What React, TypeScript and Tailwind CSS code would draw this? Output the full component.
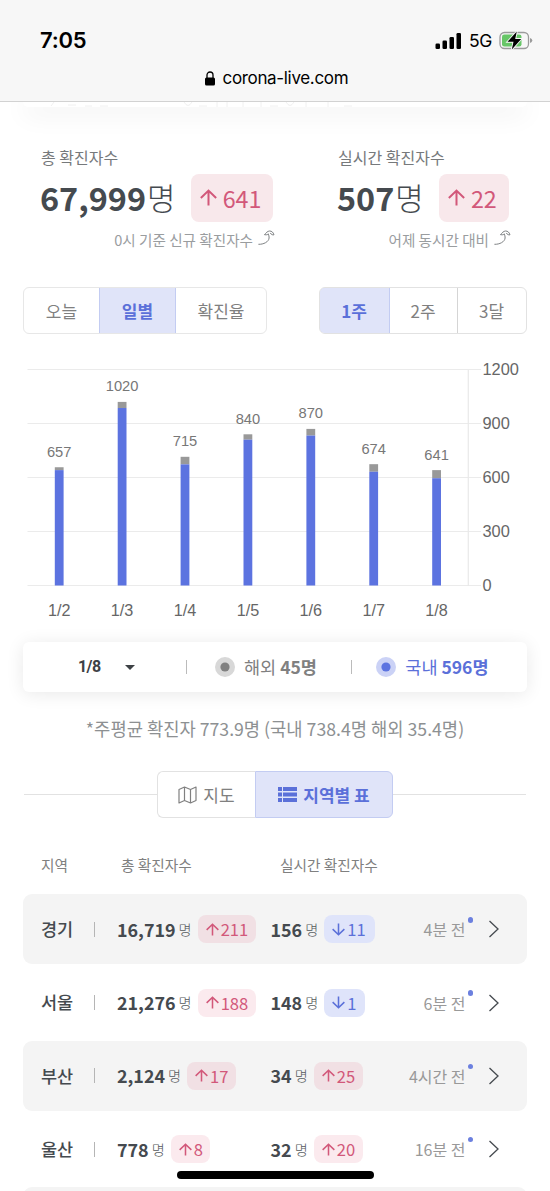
import React from "react";

const days = [
  { date: "1/2", total: 657, abroad: 16 },
  { date: "1/3", total: 1020, abroad: 34 },
  { date: "1/4", total: 715, abroad: 42 },
  { date: "1/5", total: 840, abroad: 30 },
  { date: "1/6", total: 870, abroad: 37 },
  { date: "1/7", total: 674, abroad: 42 },
  { date: "1/8", total: 641, abroad: 45 },
];

const regions = [
  { name: "경기", total: "16,719", totalDiff: 211, live: "156", liveDiff: -11, ago: "4분 전" },
  { name: "서울", total: "21,276", totalDiff: 188, live: "148", liveDiff: -1, ago: "6분 전" },
  { name: "부산", total: "2,124", totalDiff: 17, live: "34", liveDiff: 25, ago: "4시간 전" },
  { name: "울산", total: "778", totalDiff: 8, live: "32", liveDiff: 20, ago: "16분 전" },
];

const Arrow = ({ size, down = false }: { size: number; down?: boolean }) => (
  <svg
    width={size}
    height={size}
    viewBox="0 0 16 16"
    fill="none"
    stroke="currentColor"
    strokeWidth="1.9"
    className={down ? "rotate-180" : ""}
  >
    <path d="M8 15.5V2M.8 8.500L8 1.500l7.200 7" />
  </svg>
);

const CurvedArrow = () => (
  <svg width="17" height="16" viewBox="0 0 17 16" fill="none" stroke="#7e8183" strokeWidth="1" strokeLinecap="round" strokeLinejoin="round">
    <path d="M.8 14.300c4.800.2 9.900-2.400 10.300-6.300.1-1.600-.2-2.700-.8-3.800M6.800 4.700C7.900 2.600 9.600 1.200 11.600 1c2.200 0 3.600 1.300 4.400 3.800-1.600.3-2.700-.2-3.500-1.500M6.800 4.700c1.400.3 2.500.1 3.500-.5" />
  </svg>
);

/* ======= STATUS BAR ======= */
const StatusBar = () => (
  <header className="h-[102px] border-b border-[#d2d2d2] bg-[#f7f7f7] text-black">
    <div className="flex h-[62px] items-end justify-between pr-[17px] pb-[11px] pl-10 font-['Inter',sans-serif]">
      <div className="text-[22px] leading-[22px] font-semibold tracking-[-0.2px]">7:05</div>
      <div className="flex items-center">
        <svg width="26" height="16" viewBox="0 0 26 16">
          <rect x="0.500" y="10.500" width="4.500" height="5.500" rx="1.300" />
          <rect x="7.500" y="7.500" width="4.500" height="8.500" rx="1.300" />
          <rect x="14.500" y="4" width="4.500" height="12" rx="1.300" />
          <rect x="21.500" y="0" width="4.500" height="16" rx="1.300" />
        </svg>
        <span className="ml-[8px] w-[24px] text-[17.500px] leading-[20px] tracking-[-0.3px]">5G</span>
        <svg className="ml-[6px]" width="34" height="20" viewBox="0 0 34 20">
          <rect x="1" y="1.500" width="28.500" height="16" rx="4.500" fill="none" stroke="#9b9b9b" strokeWidth="1.300" />
          <path d="M31 7q2.300.8 2.300 2.500T31 12z" fill="#9b9b9b" />
          <rect x="3" y="3.500" width="19.500" height="12" rx="2.300" fill="#67c667" />
          <path d="M17.800.5L8.500 10.800h6L12.800 18.500l9.400-10.500h-6z" stroke="#f7f7f7" strokeWidth="1.800" paintOrder="stroke" />
        </svg>
      </div>
    </div>
    <div className="flex items-center justify-center pt-[6px] pl-[3px] font-['Inter',sans-serif] text-[17px] leading-[20px]">
      <svg className="mr-[8px]" width="10" height="15" viewBox="0 0 10 15">
        <rect x="0" y="6.500" width="10" height="8" rx="1.500" />
        <path d="M2 7V4a3 3 0 0 1 6 0v3" fill="none" stroke="#000" strokeWidth="1.300" />
      </svg>
      <span className="w-[126px] whitespace-nowrap tracking-[-0.33px]">corona-live.com</span>
    </div>
  </header>
);

const Stat = ({
  label,
  value,
  diff,
  note,
}: {
  label: string;
  value: string;
  diff: string;
  note: string;
}) => (
  <div>
    <div className="h-5 text-[16px] leading-5 text-[#76797b]">{label}</div>
    <div className="mt-[7px] flex h-12 items-center">
      <span className="mb-[3px] -ml-px text-[32.400px] leading-[44px] font-bold text-[#454a4f]">{value}</span>
      <span className="mb-[3px] ml-px text-[31px] leading-[44px] font-light text-[#454a4f]">명</span>
      <span className="ml-[15px] flex h-12 items-center rounded-lg bg-[#f8e8eb] pr-[12px] pl-[9px] text-[#d2587a]">
        <span className="mb-[2px]">
          <Arrow size={17} />
        </span>
        <span className="mb-px ml-[6px] text-[23.300px] leading-[30px]">{diff}</span>
      </span>
    </div>
    <div className="mt-2 flex h-5 items-center justify-end text-[14.600px] leading-5 text-[#9a9d9f]">
      <span className="mr-[5px]">{note}</span>
      <span className="-mt-1">
        <CurvedArrow />
      </span>
    </div>
  </div>
);

/* ======= CHART ======= */
const zero = 251.5;
const Chart = () => (
  <svg className="block h-[296px] w-full" viewBox="0 0 550 296" fontFamily="Liberation Sans, Arial, sans-serif">
    {[0, 300, 600, 900, 1200].map((tick) => (
      <g key={tick}>
        <path d={`M27.500 ${zero - tick * 0.18}H481`} stroke="#ebebeb" strokeWidth="1.200" />
        <text x="482.500" y={zero - tick * 0.18 + 5.8} fontSize="16.400" fill="#666">
          {tick}
        </text>
      </g>
    ))}
    <path d="M468.300 36V252" stroke="#e9e9e9" strokeWidth="1.200" />
    {days.map((day, i) => {
      const x = 59.2 + i * 62.9;
      const top = zero - day.total * 0.18;
      const home = zero - (day.total - day.abroad) * 0.18;
      return (
        <g key={day.date}>
          <rect x={x - 4.4} y={top} width="8.800" height={home - top} fill="#999" />
          <rect x={x - 4.4} y={home} width="8.800" height={zero - home} fill="#5c73e0" />
          <text x={x} y={top - 10.5} fontSize="14.700" fill="#777" textAnchor="middle">
            {day.total}
          </text>
          <text x={x} y="282" fontSize="16.200" fill="#666" textAnchor="middle">
            {day.date}
          </text>
        </g>
      );
    })}
  </svg>
);

/* ======= REGION TABLE ======= */
const Diff = ({ value }: { value: number }) => (
  <span
    className={
      value > 0
        ? "flex h-7 items-center rounded-lg bg-[#dc5076]/12 pr-[7.500px] pl-[8px] text-[#d2587a]"
        : "flex h-7 items-center rounded-lg bg-[#dfe4fa] pr-[9px] pl-[8px] text-[#5b70d9]"
    }
  >
    <Arrow size={13} down={value < 0} />
    <span className="ml-[2px] text-[16.600px] leading-6">{Math.abs(value)}</span>
  </span>
);

const Count = ({ value, diff }: { value: string; diff: number }) => (
  <>
    <span className="text-[17.900px] font-bold text-[#454a4f]">{value}</span>
    <span className="mr-[6px] ml-[3px] text-[14.200px] font-light text-[#55595c]">명</span>
    <Diff value={diff} />
  </>
);

const RegionRow = ({ region, shaded }: { region: (typeof regions)[number]; shaded: boolean }) => (
  <div
    className={
      shaded
        ? "flex h-[70px] shrink-0 items-center rounded-[9px] bg-[#f4f4f4] pl-[18px]"
        : "flex h-[70px] shrink-0 items-center rounded-[9px] pl-[18px]"
    }
  >
    <span className="w-[53px] text-[17.500px] font-medium text-[#454a4f]">{region.name}</span>
    <span className="mr-[22px] h-[15px] w-px bg-[#b5b5b5]" />
    <div className="flex w-[153.500px] items-center">
      <Count value={region.total} diff={region.totalDiff} />
    </div>
    <div className="flex items-center">
      <Count value={region.live} diff={region.liveDiff} />
    </div>
    <div className="ml-auto flex items-center text-[16px] text-[#999]">
      {region.ago}
      <span className="mb-[19px] ml-[2px] h-[5.500px] w-[5.500px] rounded-full bg-[#6c80df]" />
    </div>
    <svg className="mr-[27px] ml-[15px]" width="12" height="18" viewBox="0 0 12 18" fill="none" stroke="#454a4f" strokeWidth="1.300">
      <path d="M1.500 1l8.500 8-8.500 8" />
    </svg>
  </div>
);

const App = () => {
  return (
    <div className="relative flex h-[1191px] w-[550px] flex-col overflow-hidden bg-white font-['Noto_Sans_CJK_KR',sans-serif]">
      <div className="relative z-10">
        <StatusBar />
      </div>

      {/* Bottom edge of the card scrolled under the header */}
      <div className="mx-[23px] h-[5px] shrink-0 rounded-b-md bg-white shadow-[0_4px_26px_rgba(0,0,0,0.16)]">
        <svg width="504" height="5" fill="none" stroke="#f0f0f0">
          <path d="M28 4l3-4M45 3h8M62 4h7M77 4h8M161 0q4 7 8 0M176 4h8M194 0v5M204 0v5M220 0v5M238 0v5M247 4h8M263 0q4 7 8 0M283 0v5M305 0v5M321 4h8" />
        </svg>
      </div>

      {/* Totals */}
      <div className="mt-[40px] flex h-[103px] shrink-0">
        <div className="ml-[41px] w-[234px]">
          <Stat label="총 확진자수" value="67,999" diff="641" note="0시 기준 신규 확진자수" />
        </div>
        <div className="ml-[63px] w-[173px]">
          <Stat label="실시간 확진자수" value="507" diff="22" note="어제 동시간 대비" />
        </div>
      </div>

      {/* Filters */}
      <div className="mt-[37px] flex h-[47px] shrink-0 justify-between px-[23px] text-[17px] text-[#808080]">
        <div className="flex w-[244px] overflow-hidden rounded-md border-[1.500px] border-[#e7e7e7]">
          <div className="flex w-[75px] items-center justify-center">오늘</div>
          <div className="-my-px flex w-[77px] items-center justify-center border border-[#c3ccf2] bg-[#e0e4f9] font-bold text-[#5b70d9]">
            일별
          </div>
          <div className="flex flex-1 items-center justify-center">확진율</div>
        </div>
        <div className="flex w-[208px] overflow-hidden rounded-md border border-[#e2e2e2]">
          <div className="-m-px flex w-[71px] items-center justify-center rounded-l-md border border-[#c3ccf2] bg-[#e0e4f9] pr-px font-bold text-[#5b70d9]">
            1주
          </div>
          <div className="flex w-[69px] items-center justify-center border-r border-[#d5d5d5]">2주</div>
          <div className="flex flex-1 items-center justify-center pr-px">3달</div>
        </div>
      </div>

      <div className="h-[308px] shrink-0">
        <Chart />
      </div>

      {/* Selected day */}
      <div className="mx-[23px] flex h-[50px] shrink-0 items-center rounded-md bg-white text-[17.500px] shadow-[0_2px_18px_rgba(0,0,0,0.09)]">
        <span className="ml-[55px] w-[47px] font-['Roboto',sans-serif] text-[16px] font-bold tracking-[-0.6px] text-[#3d4145]">1/8</span>
        <svg width="10" height="5" viewBox="0 0 10 5" fill="#3d4145">
          <path d="M0 0h10L5 5z" />
        </svg>
        <span className="ml-[51px] h-[14px] w-px bg-[#bbb]" />
        <svg className="ml-[28px]" width="20" height="20" viewBox="0 0 20 20">
          <circle cx="10" cy="10" r="10" fill="#d8d8d8" />
          <circle cx="10" cy="10" r="4.600" fill="#808080" />
        </svg>
        <span className="ml-[9px] text-[#808080]">
          해외 <b>45명</b>
        </span>
        <span className="ml-auto h-[14px] w-px bg-[#bbb]" />
        <svg className="ml-[24px]" width="20" height="20" viewBox="0 0 20 20">
          <circle cx="10" cy="10" r="10" fill="#cbd2f6" />
          <circle cx="10" cy="10" r="4.600" fill="#5c73e0" />
        </svg>
        <span className="mr-[38.500px] ml-[9px] text-[#5b70d9]">
          국내 <b>596명</b>
        </span>
      </div>

      <p className="mt-[23px] h-[27px] shrink-0 text-center text-[17.700px] leading-[26px] text-[#8d9092]">
        *주평균 확진자 773.9명 (국내 738.4명 해외 35.4명)
      </p>

      {/* Map / table switch */}
      <div className="mt-[29px] flex h-[47px] shrink-0 items-center px-[24px]">
        <div className="h-px flex-1 bg-[#e2e2e2]" />
        <div className="flex h-full w-[236px] text-[17px]">
          <div className="flex w-[98px] items-center justify-center rounded-l-md border border-r-0 border-[#e2e2e2] text-[#808080]">
            <svg className="mr-[6px]" width="19" height="18" viewBox="0 0 19 18" fill="none" stroke="currentColor" strokeWidth="1.200" strokeLinejoin="round">
              <path d="M1 3.500L6.500 1l6 2.500L18 1v13.500L12.500 17l-6-2.500L1 17zM6.500 1v13.500M12.500 3.500V17" />
            </svg>
            지도
          </div>
          <div className="flex flex-1 items-center justify-center rounded-r-md border border-[#c3ccf2] bg-[#e0e4f9] font-bold text-[#5b70d9]">
            <svg className="mr-[6px]" width="19" height="15" viewBox="0 0 19 15" fill="currentColor">
              <path d="M0 0h4v4H0zM5 0h14v4H5zM0 5.500h4v4H0zM5 5.500h14v4H5zM0 11h4v4H0zM5 11h14v4H5z" />
            </svg>
            지역별 표
          </div>
        </div>
        <div className="h-px flex-1 bg-[#e2e2e2]" />
      </div>

      {/* Table header */}
      <div className="mt-[37px] flex h-[20px] shrink-0 pl-[41px] text-[14.700px] leading-[20px] text-[#808080]">
        <span className="w-[80px]">지역</span>
        <span className="w-[159px]">총 확진자수</span>
        <span>실시간 확진자수</span>
      </div>

      <div className="mx-[23px] mt-[19.300px] flex flex-col gap-[3.300px]">
        {regions.map((region, i) => (
          <RegionRow key={region.name} region={region} shaded={i % 2 === 0} />
        ))}
        <div className="h-[70px] shrink-0 rounded-[9px] bg-[#f4f4f4]" />
      </div>

      {/* Home indicator */}
      <div className="absolute bottom-[12px] left-[177px] h-[8px] w-[197px] rounded-full bg-black" />
    </div>
  );
};

export default App;
